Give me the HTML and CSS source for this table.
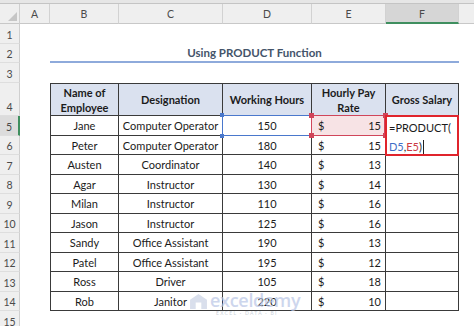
FILE: index.html
```html
<!DOCTYPE html>
<html>
<head>
<meta charset="utf-8">
<link rel="stylesheet" href="styles.css">
</head>
<body>
<div class="sheet">
  <div class="strip"></div>

  <div class="corner"><span class="tri"></span></div>
  <div class="ch">A</div>
  <div class="ch">B</div>
  <div class="ch">C</div>
  <div class="ch">D</div>
  <div class="ch">E</div>
  <div class="ch ch-sel">F</div>
  <div class="ch ch-last"></div>

  <div class="rh">1</div><div class="blank span7"></div>

  <div class="rh">2</div><div class="blank"></div>
  <div class="title">Using PRODUCT Function</div><div class="blank"></div>

  <div class="rh">3</div><div class="blank span7"></div>

  <div class="rh">4</div><div class="blank"></div>
  <div class="hd first">Name of<br>Employee</div>
  <div class="hd">Designation</div>
  <div class="hd">Working Hours</div>
  <div class="hd">Hourly Pay<br>Rate</div>
  <div class="hd">Gross Salary</div>
  <div class="blank"></div>

  <div class="rh rh-sel">5</div><div class="blank"></div>
  <div class="td first">Jane</div>
  <div class="td">Computer Operator</div>
  <div class="td sel-blue">150<span class="hb tl"></span><span class="hb tr"></span><span class="hb bl"></span><span class="hb br"></span></div>
  <div class="td money sel-red"><span>$</span><span>15</span><i class="hr tl"></i><i class="hr tr"></i><i class="hr bl"></i><i class="hr br"></i></div>
  <div class="td edit"><div class="fx">=PRODUCT(</div><div class="fx"><span class="refb">D5</span>,<span class="refr">E5</span>)<span class="caret"></span></div></div>
  <div class="blank"></div>

  <div class="rh">6</div><div class="blank"></div>
  <div class="td first">Peter</div>
  <div class="td">Computer Operator</div>
  <div class="td">180</div>
  <div class="td money"><span>$</span><span>15</span></div>
  <div class="blank"></div>

  <div class="rh">7</div><div class="blank"></div>
  <div class="td first">Austen</div>
  <div class="td">Coordinator</div>
  <div class="td">140</div>
  <div class="td money"><span>$</span><span>13</span></div>
  <div class="td"></div>
  <div class="blank"></div>

  <div class="rh">8</div><div class="blank"></div>
  <div class="td first">Agar</div>
  <div class="td">Instructor</div>
  <div class="td">130</div>
  <div class="td money"><span>$</span><span>14</span></div>
  <div class="td"></div>
  <div class="blank"></div>

  <div class="rh">9</div><div class="blank"></div>
  <div class="td first">Milan</div>
  <div class="td">Instructor</div>
  <div class="td">110</div>
  <div class="td money"><span>$</span><span>16</span></div>
  <div class="td"></div>
  <div class="blank"></div>

  <div class="rh">10</div><div class="blank"></div>
  <div class="td first">Jason</div>
  <div class="td">Instructor</div>
  <div class="td">125</div>
  <div class="td money"><span>$</span><span>16</span></div>
  <div class="td"></div>
  <div class="blank"></div>

  <div class="rh">11</div><div class="blank"></div>
  <div class="td first">Sandy</div>
  <div class="td">Office Assistant</div>
  <div class="td">190</div>
  <div class="td money"><span>$</span><span>13</span></div>
  <div class="td"></div>
  <div class="blank"></div>

  <div class="rh">12</div><div class="blank"></div>
  <div class="td first">Patel</div>
  <div class="td">Office Assistant</div>
  <div class="td">195</div>
  <div class="td money"><span>$</span><span>12</span></div>
  <div class="td"></div>
  <div class="blank"></div>

  <div class="rh">13</div><div class="blank"></div>
  <div class="td first">Ross</div>
  <div class="td">Driver</div>
  <div class="td">105</div>
  <div class="td money"><span>$</span><span>18</span></div>
  <div class="td"></div>
  <div class="blank"></div>

  <div class="rh">14</div><div class="blank"></div>
  <div class="td first">Rob</div>
  <div class="td">Janitor</div>
  <div class="td">220</div>
  <div class="td money"><span>$</span><span>10</span></div>
  <div class="td"></div>
  <div class="blank"></div>

  <div class="rh">15</div><div class="blank span7"></div>

  <div class="watermark">
    <svg class="wm-logo" width="17" height="15" viewBox="0 0 18 16"><path d="M9 0 L18 6 L18 16 L12 16 L12 9 L6 9 L6 16 L0 16 L0 6 Z" fill="#c9d2e4"/></svg>
    <div class="wm-text">
      <div class="wm-name">exceldemy</div>
      <div class="wm-sub">EXCEL · DATA · BI</div>
    </div>
  </div>
</div>
</body>
</html>
```

FILE: styles.css
```css
* { box-sizing: border-box; }
body { margin: 0; background: #fff; }
.sheet {
  position: relative;
  width: 474px;
  height: 326px;
  overflow: hidden;
  display: grid;
  grid-template-columns: 20px 30px 69px 104px 89px 74px 73px 15px;
  grid-template-rows: 4px 20px 19.5px 19.5px 20px 33px repeat(10, 19.5px) 20px;
  font-family: Lato, "Open Sans", sans-serif;
  color: #1b1b1b;
}
.strip {
  grid-column: 1 / -1;
  background: #e6e6e6;
  border-bottom: 1px solid #c4c4c4;
}
.corner {
  background: #efefef;
  border-right: 1px solid #cfcfcf;
  border-bottom: 1px solid #c8c8c8;
  position: relative;
}
.tri {
  position: absolute;
  right: 2px;
  bottom: 2px;
  width: 0; height: 0;
  border-left: 9px solid transparent;
  border-bottom: 9px solid #c6c6c6;
}
.ch {
  background: #efefef;
  border-right: 1px solid #d2d2d2;
  border-bottom: 1px solid #c8c8c8;
  font-size: 10.5px;
  color: #4a4a4a;
  display: flex;
  align-items: center;
  justify-content: center;
  padding-top: 1px;
}
.ch-sel {
  background: #d6d6d6;
  border-bottom: 2px solid #3f8f5f;
}
.ch-last { border-right: none; }
.rh {
  background: #efefef;
  border-right: 1px solid #cfcfcf;
  border-bottom: 1px solid #dedede;
  font-size: 10.5px;
  color: #4a4a4a;
  display: flex;
  align-items: flex-end;
  justify-content: center;
  padding-bottom: 2px;
}
.rh-sel {
  background: #dcdcdc;
  border-right: 2px solid #3f8f5f;
}
.blank { background: #fff; }
.span7 { grid-column: span 7; }
.title {
  grid-column: span 5;
  border-bottom: 2px solid #8eaadb;
  color: #44546a;
  font-weight: 700;
  font-size: 11.5px;
  display: flex;
  align-items: center;
  justify-content: center;
  padding-top: 1px;
}
.hd {
  background: #dae1ef;
  border-top: 1px solid #3a3a3a;
  border-right: 1px solid #3a3a3a;
  border-bottom: 1px solid #3a3a3a;
  font-weight: 700;
  font-size: 11px;
  line-height: 15px;
  text-align: center;
  display: flex;
  align-items: center;
  justify-content: center;
}
.first { border-left: 1px solid #3a3a3a; }
.td {
  position: relative;
  border-right: 1px solid #3a3a3a;
  border-bottom: 1px solid #3a3a3a;
  font-size: 11px;
  display: flex;
  align-items: center;
  justify-content: center;
  padding-top: 1px;
  white-space: nowrap;
}
.money {
  justify-content: space-between;
  padding: 1px 4px 0 6px;
}
.sel-blue::after {
  content: "";
  position: absolute;
  left: -1px; top: -1px; right: -1px; bottom: -1px;
  border: 1.5px solid #4a78cc;
  pointer-events: none;
}
.hb {
  position: absolute;
  width: 4px; height: 4px;
  background: #4a78cc;
  z-index: 2;
}
.sel-red { background: #f7e3e5; }
.sel-red::after {
  content: "";
  position: absolute;
  left: -1px; top: -1px; right: 0; bottom: -1px;
  border: 1.5px solid #d0455a;
  pointer-events: none;
}
.hr {
  position: absolute;
  width: 5px; height: 5px;
  background: #d0455a;
  z-index: 2;
}
.tl { left: -3px; top: -3px; }
.tr { right: -3px; top: -3px; }
.bl { left: -3px; bottom: -3px; }
.br { right: -3px; bottom: -3px; }
.edit {
  grid-row: span 2;
  display: block;
  padding: 1px 0 0 2px;
  border: 2px solid #e0242c;
  margin: -1px 0 -1px -1px;
  background: #fff;
  font-size: 11px;
  line-height: 19px;
  z-index: 3;
}
.fx { height: 19px; }
.refb { color: #3f6fc6; }
.refr { color: #cc3a45; }
.caret {
  display: inline-block;
  width: 1px;
  height: 14px;
  background: #222;
  vertical-align: -3px;
  margin-left: 1px;
}
.watermark {
  position: absolute;
  left: 190px;
  top: 291px;
  display: flex;
  align-items: flex-start;
  gap: 3px;
  opacity: 0.7;
  pointer-events: none;
}
.wm-logo { margin-top: 3px; }
.wm-name {
  font-family: "Open Sans", sans-serif;
  font-size: 18px;
  line-height: 19px;
  color: #b9c6e6;
  font-weight: 600;
  letter-spacing: -0.3px;
}
.wm-sub {
  font-size: 5px;
  line-height: 6px;
  color: #b8bfcc;
  letter-spacing: 1.3px;
  margin-left: 6px;
}
```
